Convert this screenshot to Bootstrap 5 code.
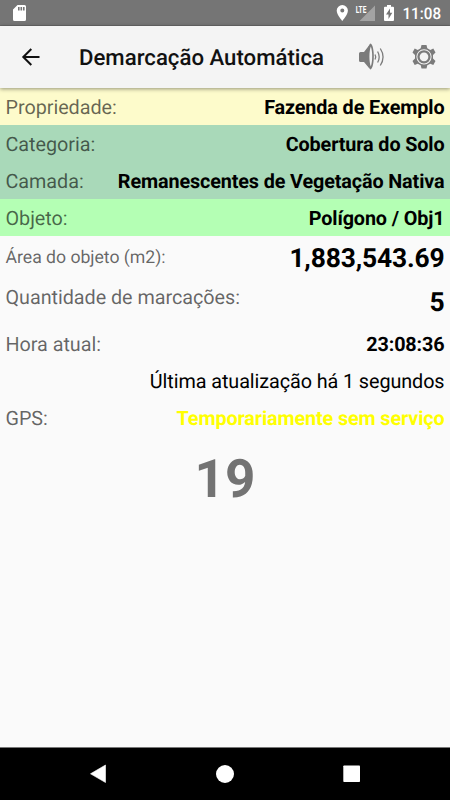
<!DOCTYPE html>
<html lang="pt-BR">
<head>
<meta charset="utf-8">
<meta name="viewport" content="width=device-width, initial-scale=1">
<title>Demarcação Automática</title>
<link rel="stylesheet" href="https://cdn.jsdelivr.net/npm/bootstrap@5.3.0/dist/css/bootstrap.min.css">
<style>
body { font-family: Roboto, sans-serif; background: #fafafa; color: #000; line-height: 1; text-rendering: geometricPrecision; }
.screen { height: 800px; width: 450px; }
.status-bar { height: 26px; background: #757575; border-bottom: 1px solid #686868; color: #fff; }
.status-bar svg, .app-bar svg, .nav-keys svg { display: block; flex: none; }
.app-bar { height: 62px; background: #f4f4f4; box-shadow: 0 1px 4px rgba(0,0,0,.42); z-index: 1; }
.app-title { font-size: 22.2px; font-weight: 500; color: #111; white-space: nowrap; padding: 2px 0 0 1px; }
.info { height: 37px; padding: 2px 5.5px 0 5.5px; font-size: 19.8px; white-space: nowrap; }
.info dt { font-weight: 400; color: rgba(0,0,0,.6); letter-spacing: -.04px; }
.info dd { font-weight: 700; margin: 0; letter-spacing: -.12px; }
.info .since { font-weight: 400; letter-spacing: -.08px; }
.farm { background: #fdfbcb; }
.theme { background: #a9d9b9; }
.object { background: #b4ffb4; }
.area { height: 44px; }
.area dt { font-size: 17.7px; }
.info .big { font-size: 26.4px; letter-spacing: -.15px; }
.marks { height: 45px; }
.marks dt { padding-bottom: 11px; }
.gps-state { color: #ff0; }
.counter { font-size: 53px; font-weight: 700; color: #737373; padding-top: 17px; }
.nav-keys { height: 53px; background: #000; border-top: 1px solid #777; }
</style>
<script src="https://cdn.jsdelivr.net/npm/bootstrap@5.3.0/dist/js/bootstrap.bundle.min.js"></script>
</head>
<body class="overflow-hidden">
<div class="screen d-flex flex-column overflow-hidden">
  <div class="status-bar d-flex align-items-start flex-shrink-0">
    <svg width="450" height="26" viewBox="0 0 450 26" fill="#fff">
      <path fill-rule="evenodd" d="M17.500 5H24.500Q26 5 26 6.500V19.500Q26 21 24.500 21H14.500Q13 21 13 19.500V9.500ZM18 7V10.500H19.600V7ZM20.500 7V10.500H22.100V7ZM23 7V10.500H24.600V7Z"/>
      <path fill-rule="evenodd" d="M342.300 5a5.600 5.600 0 0 0-5.600 5.600c0 4.200 5.600 10.400 5.600 10.400s5.600-6.200 5.600-10.400A5.600 5.600 0 0 0 342.300 5Zm0 3.600a2 2 0 1 1 0 4 2 2 0 0 1 0-4Z"/>
      <path d="M375 5.500V21H359.500Z" fill="#a3a3a3"/>
      <text x="355.800" y="12.600" font-family="Roboto, sans-serif" font-size="10" font-weight="700" textLength="10.500" lengthAdjust="spacingAndGlyphs">LTE</text>
      <path fill-rule="evenodd" d="M387 5h4v1.700h2q1 0 1 1V20q0 1-1 1h-8q-1 0-1-1V7.700q0-1 1-1h2ZM390 8.500 386 14.500H388.500V19L392.300 12.800H390Z"/>
      <text x="402.500" y="19.200" font-family="Roboto, sans-serif" font-size="16" font-weight="500" textLength="38.500" lengthAdjust="spacingAndGlyphs">11:08</text>
    </svg>
  </div>
  <header class="app-bar d-flex align-items-center position-relative flex-shrink-0">
    <svg width="62" height="62" viewBox="0 26 62 62" fill="none" stroke="#111" stroke-width="2"><path d="M39.500 57H23.500M31.300 49 23.300 57 31.300 65"/></svg>
    <h1 class="app-title mb-0 ms-3 flex-grow-1">Demarcação Automática</h1>
    <svg width="100" height="62" viewBox="350 26 100 62" fill="#7b7b7b">
      <path d="M359 53.500Q359 52 360.500 52H364L369 45.500V68L364 62H360.500Q359 62 359 60.500Z"/>
      <path fill-rule="evenodd" d="M370.500 43.500C375 45 375 68 370.500 69.500C366.500 68 366.500 45 370.500 43.500ZM370.800 46.500C369 51 369 62 370.800 66.500C372.700 62 372.700 51 370.800 46.500Z"/>
      <g fill="none" stroke="#7b7b7b" stroke-width="1.300"><path d="M375 54.500Q376.500 57 375 59.500M377.600 51.500Q380.800 57 377.600 62.500M380.300 48.500Q385.800 57 380.300 65.500"/></g>
      <path fill-rule="evenodd" d="M421.500 45H426.500L427.300 48.300L430.300 50L433.300 48.500L435.500 52.500L433 55V58.500L435.500 61L433.300 65L430.300 63.700L427.300 65.300L426.500 68.500H421.500L420.700 65.300L417.700 63.700L414.700 65L412.500 61L415 58.500V55L412.500 52.500L414.700 48.500L417.700 50L420.700 48.300ZM424 49.200a7.600 7.600 0 1 0 0 15.200 7.600 7.600 0 0 0 0-15.200Z"/>
      <circle cx="424" cy="56.800" r="5.500" fill="none" stroke="#7b7b7b" stroke-width="2.300"/>
    </svg>
  </header>
  <main class="flex-grow-1">
    <dl class="mb-0">
      <div class="info farm d-flex align-items-center justify-content-between"><dt>Propriedade:</dt><dd>Fazenda de Exemplo</dd></div>
      <div class="info theme d-flex align-items-center justify-content-between"><dt>Categoria:</dt><dd>Cobertura do Solo</dd></div>
      <div class="info theme d-flex align-items-center justify-content-between"><dt>Camada:</dt><dd>Remanescentes de Vegetação Nativa</dd></div>
      <div class="info object d-flex align-items-center justify-content-between"><dt>Objeto:</dt><dd>Polígono / Obj1</dd></div>
      <div class="info area d-flex align-items-center justify-content-between"><dt>Área do objeto (m2):</dt><dd class="big">1,883,543.69</dd></div>
      <div class="info marks d-flex align-items-center justify-content-between"><dt>Quantidade de marcações:</dt><dd class="big">5</dd></div>
      <div class="info d-flex align-items-center justify-content-between"><dt>Hora atual:</dt><dd>23:08:36</dd></div>
      <div class="info d-flex align-items-center justify-content-end"><dd class="since">Última atualização há 1 segundos</dd></div>
      <div class="info d-flex align-items-center justify-content-between"><dt>GPS:</dt><dd class="gps-state">Temporariamente sem serviço</dd></div>
    </dl>
    <div class="counter text-center">19</div>
  </main>
  <footer class="nav-keys d-flex flex-shrink-0">
    <svg width="450" height="52" viewBox="0 748 450 52" fill="#fff">
      <path d="M90.500 773.800 105.500 765V782.500Z" stroke="#fff" stroke-width=".6" stroke-linejoin="round"/>
      <circle cx="225" cy="774" r="9"/>
      <rect x="343.300" y="765.500" width="16.700" height="16.500" rx=".8"/>
    </svg>
  </footer>
</div>
</body>
</html>
